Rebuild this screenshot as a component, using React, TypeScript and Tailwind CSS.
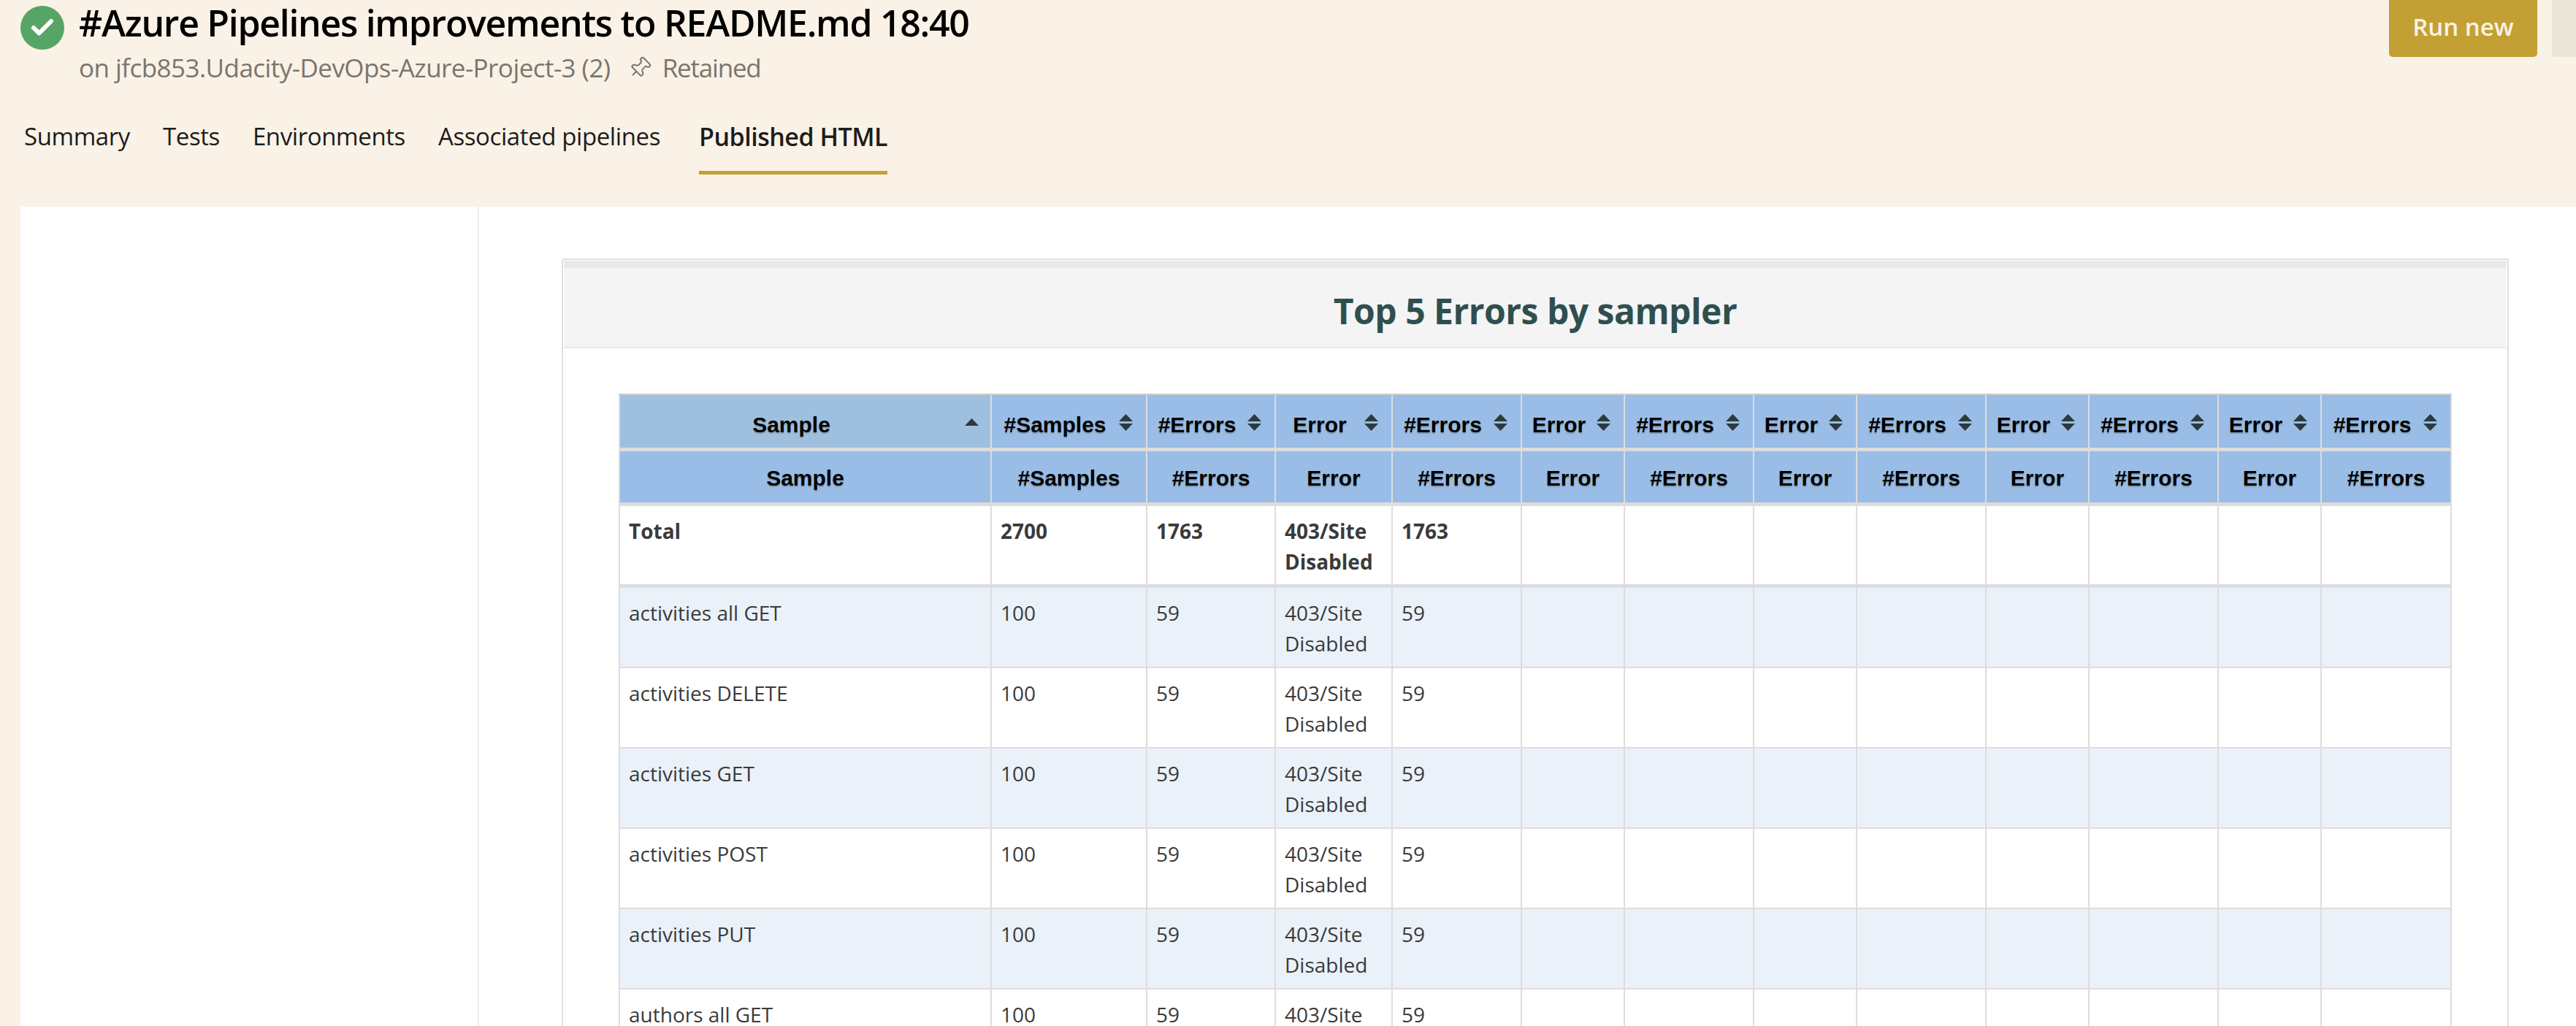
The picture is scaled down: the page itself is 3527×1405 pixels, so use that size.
import { Check, Pin } from "lucide-react";

const colWidths = [
	"w-[509px]",
	"w-[213px]",
	"w-[176px]",
	"w-[160px]",
	"w-[177px]",
	"w-[141px]",
	"w-[177px]",
	"w-[141px]",
	"w-[177px]",
	"w-[141px]",
	"w-[177px]",
	"w-[141px]",
	"w-[178px]",
];

const headers = [
	"Sample",
	"#Samples",
	"#Errors",
	"Error",
	"#Errors",
	"Error",
	"#Errors",
	"Error",
	"#Errors",
	"Error",
	"#Errors",
	"Error",
	"#Errors",
];

const rows = [
	"activities all GET",
	"activities DELETE",
	"activities GET",
	"activities POST",
	"activities PUT",
	"authors all GET",
];

const tabs = ["Summary", "Tests", "Environments", "Associated pipelines"];

const SortIcon = ({ asc }: { asc?: boolean }) => (
	<svg
		viewBox="0 0 19 24"
		className={`absolute top-[26px] h-6 w-[19px] text-[#2d3a3c] ${
			asc ? "right-[16px]" : "right-[18px]"
		}`}
		fill="currentColor"
	>
		{asc ?
			<path d="M9.5 6 19 16H0Z" />
		:	<>
				<path d="M9.5 0 19 10H0Z" />
				<path d="M0 13h19L9.5 23Z" />
			</>
		}
	</svg>
);

const Cell = ({
	value,
	strong,
}: {
	value?: string;
	strong?: boolean;
}) => (
	<td
		className={`border-l-2 border-[#dddddd] px-[12px] pt-[13px] align-top leading-[42px] ${
			strong ? "border-b-[5px] font-bold" : "border-b-2"
		}`}
	>
		{value}
	</td>
);

const DataRow = ({
	name,
	samples,
	errors,
	strong,
	striped,
}: {
	name: string;
	samples: string;
	errors: string;
	strong?: boolean;
	striped?: boolean;
}) => (
	<tr
		className={`${strong ? "h-[112px]" : "h-[110px]"} ${
			striped ? "bg-[#eaf1f9]" : "bg-white"
		}`}
	>
		<Cell value={name} strong={strong} />
		<Cell value={samples} strong={strong} />
		<Cell value={errors} strong={strong} />
		<Cell value="403/Site Disabled" strong={strong} />
		<Cell value={errors} strong={strong} />
		{Array.from({ length: 8 }, (_, i) => (
			<Cell key={i} strong={strong} />
		))}
	</tr>
);

export default function App() {
	return (
		<div className="flex h-screen flex-col overflow-hidden bg-[#faf2e6] font-['Open_Sans',sans-serif]">
			<header className="relative h-[283px] shrink-0">
				<div className="flex items-start gap-5 pl-[28px]">
					<div className="mt-2 flex h-[60px] w-[60px] items-center justify-center rounded-full bg-[#57a566]">
						<Check className="h-9 w-9 text-white" strokeWidth={4} />
					</div>
					<div>
						<h1 className="text-[50px] leading-[62px] font-semibold tracking-[-1.3px] text-black">
							#Azure Pipelines improvements to README.md 18:40
						</h1>
						<div className="mt-[7px] flex items-center text-[35px] leading-[48px] text-[#7a756f]">
							<span className="tracking-[-0.55px]">
								on jfcb853.Udacity-DevOps-Azure-Project-3 (2)
							</span>
							<Pin
								className="ml-[24px] mr-[15px] h-8 w-8 rotate-45"
								strokeWidth={1.5}
							/>
							<span className="tracking-[-1.2px]">Retained</span>
						</div>
					</div>
				</div>

				<nav className="mt-[46px] flex pl-[33px] text-[33px] leading-[48px] tracking-[-0.4px] text-[#1c1c1c]">
					{tabs.map((tab) => (
						<span key={tab} className="mr-[45px]">
							{tab}
						</span>
					))}
					<span className="ml-[8px] border-b-[5px] border-[#c3a033] pb-[23px] text-[34px] font-semibold tracking-[-0.5px]">
						Published HTML
					</span>
				</nav>

				<div className="absolute right-0 top-0 flex gap-5">
					<button className="h-[78px] w-[203px] rounded-b-[5px] bg-[#c3a033] pb-1 text-[33px] font-semibold text-[#faf2e6]">
						Run new
					</button>
					<div className="h-[78px] w-[33px] rounded-bl-[5px] bg-[#ece5d9]" />
				</div>
			</header>

			<div className="ml-[28px] flex flex-1 bg-white">
				<aside className="w-[628px] shrink-0 border-r-2 border-[#eeeeee]" />
				<main className="pl-[113px] pt-[71px]">
					<section className="w-[2666px] rounded-t-[3px] border-x-2 border-t-2 border-[#e0e0e0] px-px pt-px">
						<div className="h-[10px] bg-[#e7eaec]" />
						<div className="flex h-[110px] items-center justify-center border-b-2 border-[#e7eaec] bg-[#f4f4f4] pt-[10px]">
							<h2 className="text-[48px] font-bold tracking-[-0.5px] text-[#2f4f4f]">
								Top 5 Errors by sampler
							</h2>
						</div>
						<div className="pl-[75px] pt-[62px]">
							<table className="w-[2510px] table-fixed border-separate border-spacing-0 border-t-2 border-r-2 border-t-[#cccccc] border-r-[#dddddd] text-[28px] text-[#3a3a3a]">
								<colgroup>
									{colWidths.map((w, i) => (
										<col key={i} className={w} />
									))}
								</colgroup>
								<thead className="font-['Liberation_Sans',Arial,sans-serif] text-[30px] font-bold text-black [text-shadow:0_2px_1px_rgba(90,90,90,0.35)]">
									<tr>
										{headers.map((h, i) => (
											<th
												key={i}
												className={`relative h-[77px] border-b-[5px] border-l-2 border-[#dddddd] pl-[12px] pr-[50px] pt-[9px] text-center ${
													i === 0 ? "bg-[#9fbfdf]" : "bg-[#99bde6]"
												}`}
											>
												{h}
												<SortIcon asc={i === 0} />
											</th>
										))}
									</tr>
									<tr>
										{headers.map((h, i) => (
											<th
												key={i}
												className="h-[75px] border-b-[5px] border-l-2 border-[#dddddd] bg-[#99bde6] px-2 pt-[2px] text-center"
											>
												{h}
											</th>
										))}
									</tr>
								</thead>
								<tbody>
									<DataRow
										name="Total"
										samples="2700"
										errors="1763"
										strong
									/>
									{rows.map((name, i) => (
										<DataRow
											key={name}
											name={name}
											samples="100"
											errors="59"
											striped={i % 2 === 0}
										/>
									))}
								</tbody>
							</table>
						</div>
					</section>
				</main>
			</div>
		</div>
	);
}
